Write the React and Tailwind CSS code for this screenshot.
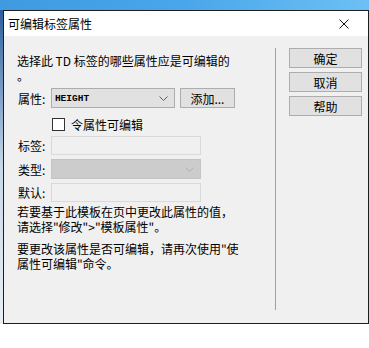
import React from 'react';

const cjk = { fontFamily: '"Noto Sans CJK SC", "Liberation Sans", sans-serif' };

function Chevron({ color = '#606060' }) {
  return (
    <svg width="9" height="5" viewBox="0 0 9 5" fill="none">
      <path d="M0.5 0.5 L4.5 4.5 L8.5 0.5" stroke={color} strokeWidth="1" />
    </svg>
  );
}

function Field({ label, children }) {
  return (
    <div className="flex items-center">
      <span className="w-[34px] pl-[1px] leading-[15px]">{label}</span>
      {children}
    </div>
  );
}

function SideButton({ children }) {
  return (
    <button className="w-[73px] h-[20px] bg-[#e1e1e1] border border-[#adadad] text-[12px] leading-[15px] text-black flex items-center justify-center">
      {children}
    </button>
  );
}

export default function App() {
  return (
    <div className="w-[369px] h-[348px] overflow-hidden bg-white flex flex-col text-black" style={cjk}>
      {/* desktop behind the dialog */}
      <div className="h-[10px] shrink-0 bg-gradient-to-r from-[#3f9ae0] via-[#4aa6ea] to-[#6cc0f4]" />
      <div className="flex shrink-0">
        <div className="w-[3px] h-[314px] bg-gradient-to-b from-[#2a5f9e] via-[#c8d8e8] to-[#e8eef4]" />

        {/* dialog */}
        <div className="w-[380px] h-[314px] border border-[#1e1e1e] bg-[#f0f0f0] flex flex-col">
          <div className="h-[25px] bg-white flex items-center pl-[4px] pr-[16px] justify-between">
            <span className="text-[12px] leading-[15px]">可编辑标签属性</span>
            <svg width="10" height="10" viewBox="0 0 10 10" className="mr-[3px]">
              <path d="M0.5 0.5 L9.5 9.5 M9.5 0.5 L0.5 9.5" stroke="#111" strokeWidth="1" />
            </svg>
          </div>

          <div className="flex pt-[12px] text-[12px] leading-[15px]">
            {/* left column */}
            <div className="w-[271px] pl-[13px] pt-[5px] flex flex-col">
              <p>选择此 TD 标签的哪些属性应是可编辑的<br />。</p>

              <div className="mt-[5px]">
                <Field label="属性:">
                  <div className="w-[124px] h-[20px] bg-[#e1e1e1] border border-[#adadad] flex items-center justify-between pl-[3px] pr-[6px]">
                    <span className="text-[9.5px] font-bold" style={{ fontFamily: '"Liberation Mono", monospace' }}>HEIGHT</span>
                    <Chevron />
                  </div>
                  <button className="ml-[5px] w-[55px] h-[20px] bg-[#e1e1e1] border border-[#adadad] text-[12px] leading-[15px] flex items-center justify-center">
                    添加...
                  </button>
                </Field>
              </div>

              <div className="flex items-center h-[20px] mt-[6px] pl-[35px]">
                <span className="w-[13px] h-[13px] border border-[#333] bg-white" />
                <span className="ml-[6px]">令属性可编辑</span>
              </div>

              <div className="mt-[2px] flex flex-col gap-[4px]">
                <Field label="标签:">
                  <div className="w-[150px] h-[19px] border border-[#d9d9d9] bg-[#f0f0f0]" />
                </Field>
                <Field label="类型:">
                  <div className="w-[150px] h-[20px] border border-[#c4c4c4] bg-[#cccccc] flex items-center justify-end pr-[6px]">
                    <Chevron color="#b0b0b0" />
                  </div>
                </Field>
                <Field label="默认:">
                  <div className="w-[150px] h-[19px] border border-[#d9d9d9] bg-[#f0f0f0]" />
                </Field>
              </div>

              <p className="mt-[2px]">若要基于此模板在页中更改此属性的值，<br />请选择"修改"&gt;"模板属性"。</p>
              <p className="mt-[7px]">要更改该属性是否可编辑，请再次使用"使<br />属性可编辑"命令。</p>
            </div>

            {/* separator */}
            <div className="w-[1px] h-[262px] bg-[#a0a0a0]" />

            {/* right column */}
            <div className="ml-[13px] flex flex-col gap-[4px]">
              <SideButton>确定</SideButton>
              <SideButton>取消</SideButton>
              <SideButton>帮助</SideButton>
            </div>
          </div>
        </div>
      </div>
    </div>
  );
}
